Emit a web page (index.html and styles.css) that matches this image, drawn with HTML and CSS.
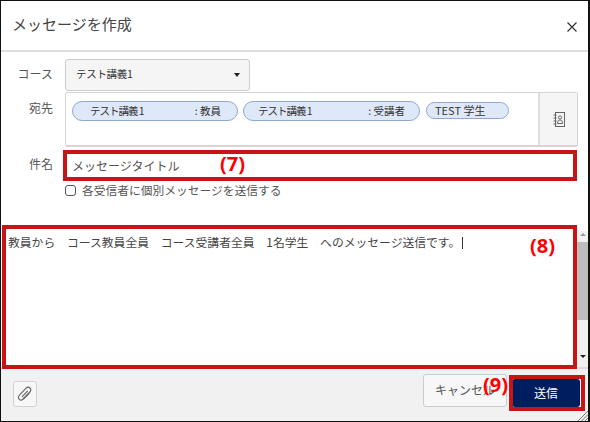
FILE: index.html
```html
<!DOCTYPE html>
<html lang="ja">
<head>
  <meta charset="utf-8">
  <title>メッセージを作成</title>
  <link rel="stylesheet" href="styles.css">
</head>
<body>
  <div class="dialog">
    <header class="dialog-head">
      <h1 class="dialog-title">メッセージを作成</h1>
      <svg class="close-icon" width="12" height="12" viewBox="0 0 12 12"><path d="M1.5 1.5l9 9M10.5 1.5l-9 9" stroke="#333" stroke-width="1.2" fill="none"/></svg>
    </header>

    <div class="form">
      <div class="row row-course">
        <div class="label label-course">コース</div>
        <div class="select">
          <span class="select-text">テスト講義1</span>
          <span class="caret"></span>
        </div>
      </div>

      <div class="row row-to">
        <div class="label label-to">宛先</div>
        <div class="to-box">
          <div class="chips">
            <span class="chip chip-teacher"><span class="chip-name">テスト講義 1</span><span>: 教員</span></span>
            <span class="chip chip-learner"><span class="chip-name">テスト講義 1</span><span>: 受講者</span></span>
            <span class="chip chip-user">TEST 学生</span>
          </div>
          <div class="address-btn">
            <svg width="12" height="15" viewBox="0 0 12 15"><g fill="none" stroke="#666" stroke-width="1"><rect x="2.500" y="0.500" width="9" height="14"/><path d="M0.500 3h3M0.500 6h3M0.500 9h3M0.500 12h3"/><circle cx="7" cy="5.500" r="1.600"/><path d="M4.500 11.500c0-2.500 1-3.500 2.500-3.500s2.500 1 2.500 3.500z"/></g></svg>
          </div>
        </div>
      </div>

      <div class="row row-subject">
        <div class="label label-subject">件名</div>
        <div class="subject">メッセージタイトル</div>
      </div>

      <label class="row row-check">
        <span class="checkbox"></span>
        <span class="check-text">各受信者に個別メッセージを送信する</span>
      </label>
    </div>

    <div class="message">
      <div class="message-text">教員から　コース教員全員　コース受講者全員　1名学生　へのメッセージ送信です。<span class="cursor"></span></div>
      <div class="scrollbar">
        <span class="arrow arrow-up"></span>
        <div class="scroll-track"><div class="scroll-thumb"></div></div>
        <span class="arrow arrow-down"></span>
      </div>
    </div>

    <footer class="dialog-foot">
      <div class="attach-btn">
        <svg width="16" height="16" viewBox="0 0 16 16"><path d="M5.500 13.500L12.800 6c1.300-1.300 1.300-3 .2-4s-2.700-1-3.900.2L2.900 8.600c-1.700 1.800-1.700 3.700-.6 4.800s3 1 4.700-.7l5.500-5.600M5 10.800l5.700-5.900" fill="none" stroke="#666" stroke-width="1.100"/></svg>
      </div>
      <div class="foot-buttons">
        <div class="btn btn-cancel">キャンセル</div>
        <div class="btn btn-send">送信</div>
      </div>
      <svg class="grip" width="11" height="11" viewBox="0 0 11 11"><path d="M11 1L1 11M11 4.500L4.500 11M11 8L8 11" stroke="#777" fill="none"/></svg>
    </footer>

    <!-- red annotations on top of the screenshot -->
    <div class="mark mark-subject"></div>
    <div class="mark mark-message"></div>
    <div class="mark mark-send"></div>
    <div class="mark-no no-7">(7)</div>
    <div class="mark-no no-8">(8)</div>
    <div class="mark-no no-9">(9)</div>
  </div>
</body>
</html>
```

FILE: styles.css
```css
* {
  box-sizing: border-box;
}

html, body {
  margin: 0;
  padding: 0;
}

body {
  width: 590px;
  height: 422px;
  overflow: hidden;
  background-color: #fff;
  color: #444;
  font-family: "Noto Sans CJK JP", "Open Sans", sans-serif;
  font-size: 12px;
}

.dialog {
  position: relative;
  display: flex;
  flex-direction: column;
  width: 590px;
  height: 422px;
  border: 1px solid #111;
  border-right-width: 2px;
  background-color: #fff;
}

.dialog-head {
  display: flex;
  justify-content: space-between;
  align-items: center;
  height: 51px;
  padding: 0 10px 0 11px;
  border-bottom: 2px solid #dcdfdc;
}

.dialog-title {
  margin: 0 0 5px 0;
  font-size: 15px;
  font-weight: 400;
  color: #444;
}

.close-icon {
  margin-top: 2px;
}

.form {
  display: flex;
  flex-direction: column;
  padding: 7px 0 0 0;
}

.row {
  display: flex;
}

.label {
  width: 52px;
  margin-right: 12px;
  text-align: right;
  color: #555;
}

.label-course {
  padding-bottom: 4px;
}

.label-subject {
  padding-bottom: 6px;
}

.row-course {
  align-items: center;
  height: 32px;
}

.select {
  display: flex;
  justify-content: space-between;
  align-items: center;
  width: 185px;
  height: 32px;
  padding: 0 9px 0 10px;
  border: 1px solid #ccc;
  border-radius: 3px;
  background-color: #f5f5f5;
  color: #333;
  font-size: 10.500px;
}

.select-text {
  padding-bottom: 3px;
  letter-spacing: -0.300px;
}

.caret {
  width: 0;
  height: 0;
  border-left: 3.500px solid transparent;
  border-right: 3.500px solid transparent;
  border-top: 4px solid #222;
}

.row-to {
  height: 55px;
  margin-top: 1px;
}

.label-to {
  padding-top: 7px;
}

.to-box {
  display: flex;
  width: 513px;
  height: 55px;
  border: 1px solid #d5d5d5;
  border-bottom-width: 2px;
  border-radius: 2px;
}

.chips {
  flex: 1;
  display: flex;
  align-items: flex-start;
  gap: 5px;
  padding: 8px 0 0 6px;
  border-right: 2px solid #dedede;
}

.chip {
  display: flex;
  align-items: center;
  height: 20px;
  padding-bottom: 2px;
  border: 1px solid #8fa9cf;
  border-radius: 10px;
  background-color: #dfe8f8;
  color: #333;
  font-size: 10.500px;
  white-space: nowrap;
}

.chip-name {
  letter-spacing: -1px;
}

.chip-teacher {
  justify-content: space-between;
  width: 166px;
  padding-left: 17px;
  padding-right: 16px;
}

.chip-learner {
  justify-content: space-between;
  width: 177px;
  padding-left: 14px;
  padding-right: 14px;
}

.chip-user {
  width: 83px;
  height: 17px;
  margin-top: 1px;
  margin-left: 1px;
  padding-left: 8px;
  font-size: 11px;
}

.address-btn {
  display: flex;
  justify-content: center;
  align-items: center;
  width: 37px;
  background-color: #f5f5f5;
}

.row-subject {
  align-items: center;
  height: 29px;
  margin-top: 5px;
}

.subject {
  padding-left: 7px;
  padding-bottom: 3px;
  color: #555;
  font-size: 12px;
}

.row-check {
  align-items: center;
  height: 14px;
  margin-top: 2px;
  padding-left: 64px;
  gap: 6px;
  color: #555;
  font-size: 11.750px;
}

.check-text {
  padding-bottom: 2px;
}

.checkbox {
  width: 11px;
  height: 11px;
  border: 1px solid #555;
  border-radius: 3px;
  background-color: #fff;
}

.message {
  display: flex;
  flex: 1;
  margin-top: 34px;
  border-bottom: 2px solid #dedede;
}

.message-text {
  flex: 1;
  padding: 2px 0 0 7px;
  color: #444;
  font-size: 11.800px;
}

.cursor {
  display: inline-block;
  width: 1px;
  height: 12px;
  margin-left: 2px;
  vertical-align: -2px;
  background-color: #333;
}

.scrollbar {
  display: flex;
  flex-direction: column;
  align-items: center;
  justify-content: space-between;
  width: 11px;
  padding: 2px 0 9px 0;
  background-color: #f1f1f1;
}

.scroll-track {
  flex: 1;
  width: 100%;
  margin-top: 6px;
}

.scroll-thumb {
  width: 100%;
  height: 78px;
  background-color: #bdbdbd;
}

.arrow {
  width: 0;
  height: 0;
  border-left: 3px solid transparent;
  border-right: 3px solid transparent;
}

.arrow-up {
  border-bottom: 3px solid #999;
}

.arrow-down {
  border-top: 3px solid #222;
}

.dialog-foot {
  position: relative;
  display: flex;
  justify-content: space-between;
  align-items: flex-start;
  height: 52px;
  flex-shrink: 0;
  padding: 12px 8px 0 12px;
  background-color: #f1f1f1;
}

.attach-btn {
  display: flex;
  justify-content: center;
  align-items: center;
  width: 24px;
  height: 26px;
  border: 1px solid #d2d2d2;
  border-radius: 3px;
  background-color: #f7f7f7;
}

.foot-buttons {
  display: flex;
  gap: 5px;
  margin-top: -7px;
}

.btn {
  display: flex;
  justify-content: center;
  align-items: center;
  height: 33px;
  padding-bottom: 2px;
  border-radius: 3px;
  font-size: 12px;
}

.btn-cancel {
  width: 84px;
  border: 1px solid #ccc;
  background-color: #f7f7f7;
  color: #555;
}

.btn-send {
  width: 68px;
  height: 28px;
  margin-top: 5px;
  background-color: #001e5f;
  color: #fff;
}

.grip {
  position: absolute;
  right: 0;
  bottom: 0;
}

.mark {
  position: absolute;
  border: 4px solid #c81414;
}

.mark-subject {
  left: 62px;
  top: 149px;
  width: 514px;
  height: 31px;
}

.mark-message {
  left: 1px;
  top: 224px;
  width: 575px;
  height: 144px;
}

.mark-send {
  left: 508px;
  top: 374px;
  width: 76px;
  height: 36px;
}

.mark-no {
  position: absolute;
  color: #f00;
  font-family: "Open Sans", sans-serif;
  font-size: 20px;
  font-weight: 700;
  line-height: 24px;
}

.no-7 {
  left: 219px;
  top: 151px;
}

.no-8 {
  left: 529px;
  top: 233px;
}

.no-9 {
  left: 482px;
  top: 372px;
}
```
